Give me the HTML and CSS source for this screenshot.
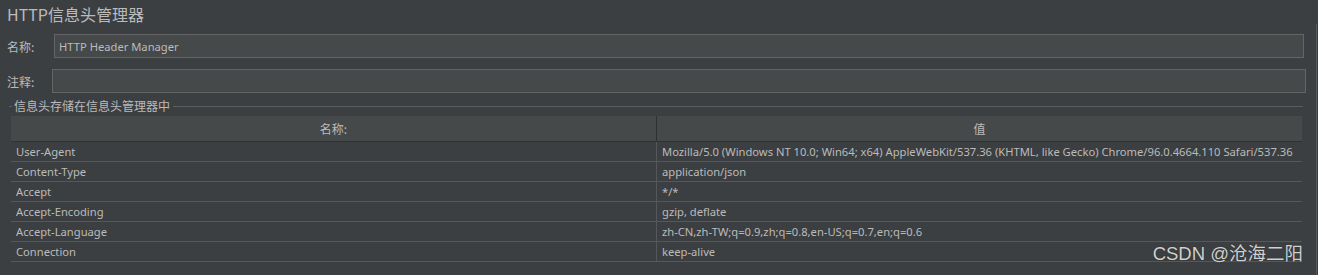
FILE: index.html
```html
<!DOCTYPE html>
<html lang="zh-CN">
<head>
<meta charset="utf-8">
<title>HTTP信息头管理器</title>
<link rel="stylesheet" href="styles.css">
</head>
<body>
<div class="panel">
  <div class="title">HTTP信息头管理器</div>
  <div class="field field-name">
    <label class="label">名称:</label>
    <div class="input">HTTP Header Manager</div>
  </div>
  <div class="field field-comment">
    <label class="label">注释:</label>
    <div class="input"></div>
  </div>
  <div class="group">
    <div class="legend"><span class="tick"></span><span class="legend-text">信息头存储在信息头管理器中</span><span class="rule"></span></div>
    <table class="grid">
      <thead>
        <tr><th class="c1">名称:</th><th class="c2">值</th></tr>
      </thead>
      <tbody>
        <tr><td>User-Agent</td><td>Mozilla/5.0 (Windows NT 10.0; Win64; x64) AppleWebKit/537.36 (KHTML, like Gecko) Chrome/96.0.4664.110 Safari/537.36</td></tr>
        <tr><td>Content-Type</td><td>application/json</td></tr>
        <tr><td>Accept</td><td>*/*</td></tr>
        <tr><td>Accept-Encoding</td><td>gzip, deflate</td></tr>
        <tr><td>Accept-Language</td><td>zh-CN,zh-TW;q=0.9,zh;q=0.8,en-US;q=0.7,en;q=0.6</td></tr>
        <tr><td>Connection</td><td>keep-alive</td></tr>
      </tbody>
    </table>
  </div>
  <div class="edge"></div>
  <div class="watermark">CSDN @沧海二阳</div>
</div>
</body>
</html>
```

FILE: styles.css
```css
html, body {
  margin: 0;
  padding: 0;
  background: #3c3f41;
}
body {
  width: 1318px;
  height: 275px;
  overflow: hidden;
  font-family: "Noto Sans", "Noto Sans CJK SC", sans-serif;
  font-size: 11.2px;
  color: #bbbbbb;
}
.panel {
  position: relative;
  height: 275px;
}
.title {
  font-family: "Noto Sans CJK SC", sans-serif;
  font-size: 16px;
  line-height: 20px;
  padding: 4px 0 0 7px;
  height: 30px;
  box-sizing: border-box;
  color: #bbbbbb;
}
.field {
  display: flex;
  align-items: center;
}
.label {
  font-family: "Noto Sans CJK SC", sans-serif;
  font-size: 12px;
  padding-left: 7px;
}
.input {
  box-sizing: border-box;
  height: 24px;
  background: #45494a;
  border: 1px solid #646464;
  line-height: 23px;
  padding-left: 4px;
  color: #bbbbbb;
}
.field-name {
  margin-top: 4px;
}
.field-name .label { width: 47px; }
.field-name .input { width: 1250px; }
.field-comment {
  margin-top: 11px;
}
.field-comment .label { width: 45px; }
.field-comment .input { width: 1254px; }
.group {
  margin-top: 6px;
  padding-left: 9px;
  width: 1294px;
}
.legend {
  display: flex;
  align-items: center;
  height: 14px;
}
.tick {
  width: 3px;
  height: 1px;
  background: #5a5e60;
}
.legend-text {
  font-family: "Noto Sans CJK SC", sans-serif;
  font-size: 12px;
  padding: 0 3px 0 2px;
  line-height: 14px;
}
.rule {
  flex: 1;
  height: 1px;
  background: #5a5e60;
}
.grid {
  margin-top: 3px;
  margin-left: 2px;
  border-collapse: collapse;
  table-layout: fixed;
  width: 1291px;
}
.grid th {
  height: 25px;
  padding: 0;
  background: #45494a;
  font-weight: normal;
  font-family: "Noto Sans CJK SC", sans-serif;
  font-size: 12px;
  border-bottom: 1px solid #2f3133;
  text-align: center;
}
.grid th.c1 {
  width: 645px;
  border-right: 1px solid #2f3133;
}
.grid td {
  height: 19px;
  padding: 0 0 0 5px;
  border-bottom: 1px solid #54585a;
  white-space: nowrap;
  overflow: hidden;
  line-height: 19px;
}
.grid td:first-child {
  border-right: 1px solid #54585a;
}
.edge {
  position: absolute;
  left: 1316px;
  top: 24px;
  width: 1px;
  bottom: 0;
  background: #55595b;
}
.watermark {
  position: absolute;
  right: 15px;
  top: 243px;
  font-family: "Liberation Sans", "Noto Sans CJK SC", sans-serif;
  font-size: 18.5px;
  line-height: 22px;
  color: #d0d0d0;
  text-shadow: 0 0 1px #222;
}
```
